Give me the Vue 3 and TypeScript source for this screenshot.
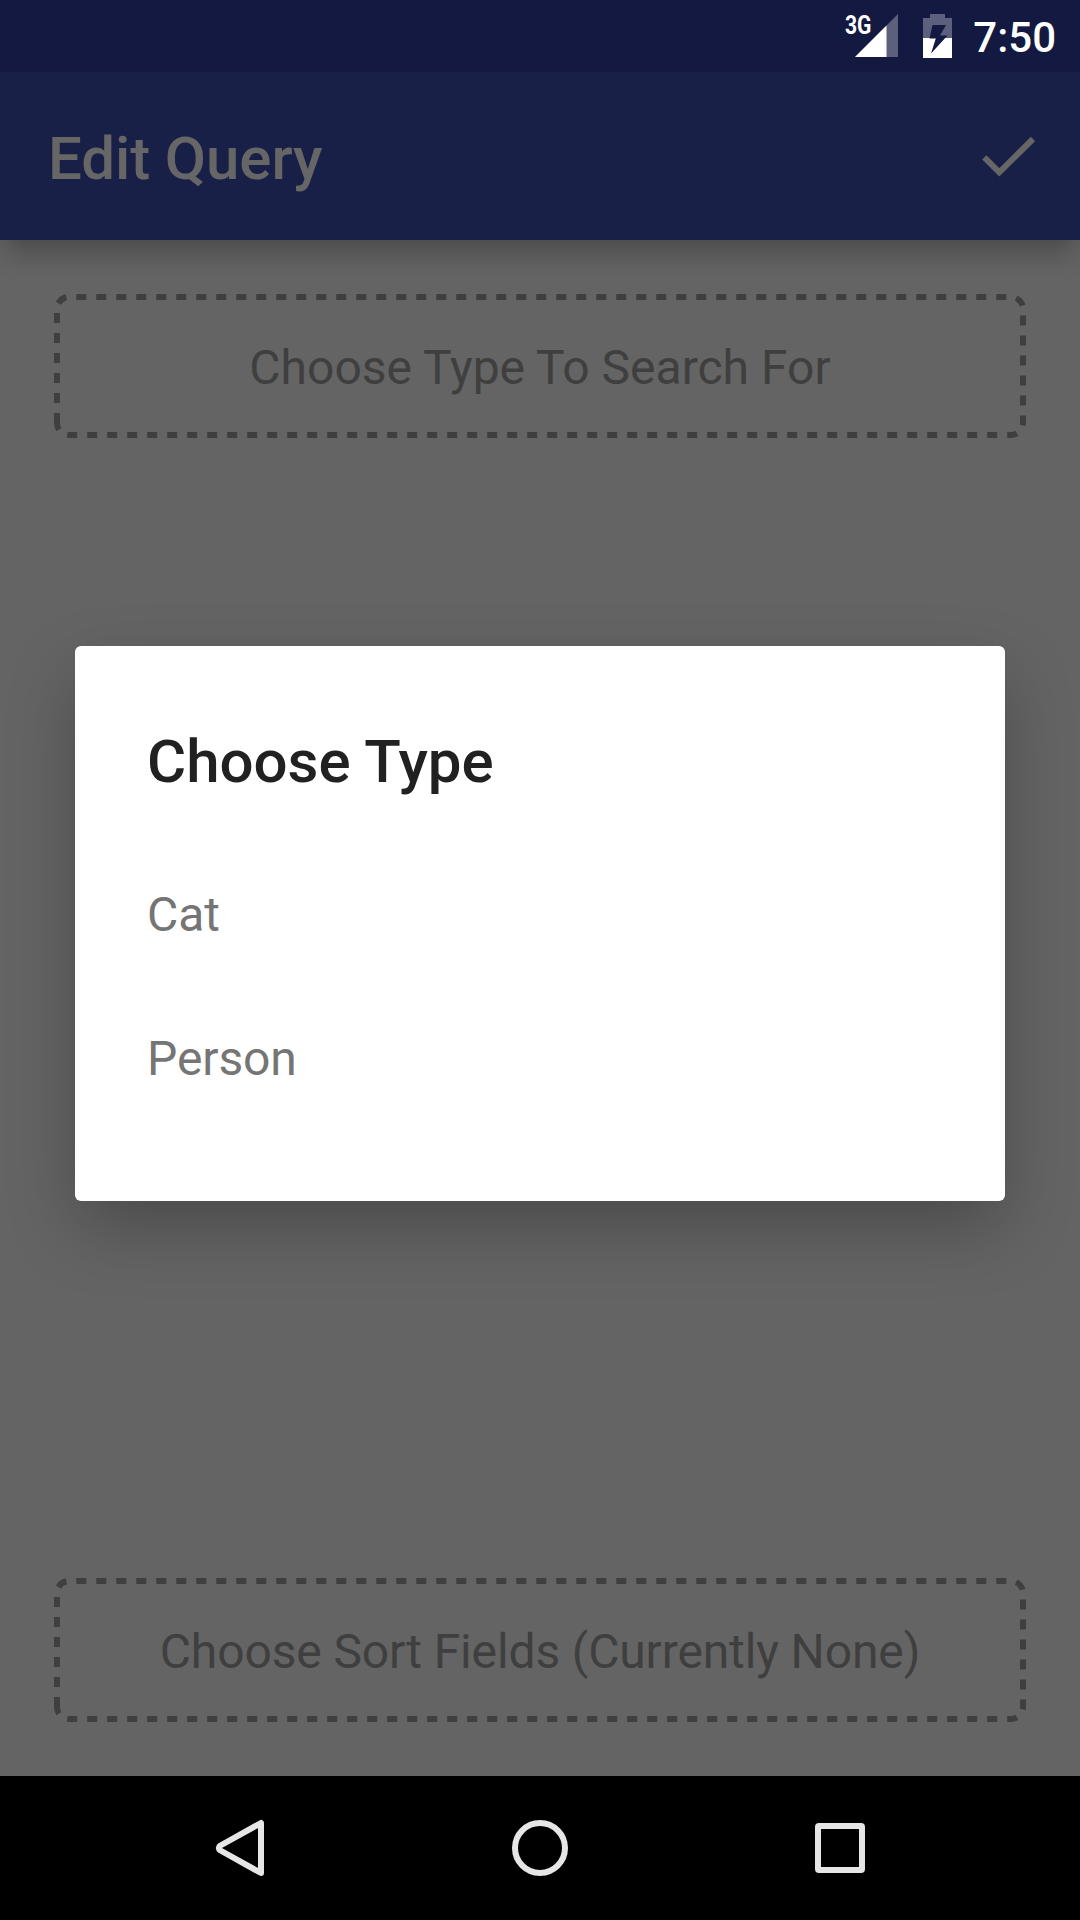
<script setup lang="ts">
const types: string[] = ['Cat', 'Person']

// Rounded outline starting at the bottom of the left edge, so the dashes run clockwise from there
const outline = 'M3 129V15A12 12 0 0 1 15 3H957A12 12 0 0 1 969 15V129A12 12 0 0 1 957 141H15A12 12 0 0 1 3 129Z'
</script>

<template>
  <div class="screen">
    <div class="status">
      <svg class="signal" width="54" height="46" viewBox="0 0 54 46">
        <path d="M53 1V44H10Z" fill="#5d607d" />
        <path d="M41.5 12.5V44H10Z" fill="#fff" />
        <text x="0" y="20.500" textLength="26.500" lengthAdjust="spacingAndGlyphs">3G</text>
      </svg>
      <svg class="battery" width="29" height="44" viewBox="0 0 29 44">
        <path d="M7 0H22V4H29V24H0V4H7Z" fill="#5d607d" />
        <path d="M0 24H29V44H0Z" fill="#fff" />
        <path d="M9.5 11H23L17 21.500H24.500L8 39.500L12.800 24.500H6.500Z" fill="#131940" />
      </svg>
      <span class="time">7:50</span>
    </div>
    <header class="appbar">
      <h1>Edit Query</h1>
      <svg width="54" height="42" viewBox="0 0 54 42">
        <path d="M2.300 22.300L17.300 37.300L51 4" fill="none" stroke="#666" stroke-width="6" />
      </svg>
    </header>
    <main class="content">
      <div class="slot">
        <svg width="972" height="144" viewBox="0 0 972 144"><path :d="outline" /></svg>
        <span>Choose Type To Search For</span>
      </div>
      <div class="slot sort">
        <svg width="972" height="144" viewBox="0 0 972 144"><path :d="outline" /></svg>
        <span>Choose Sort Fields (Currently None)</span>
      </div>
    </main>
    <nav class="navbar">
      <svg width="56" height="60" viewBox="0 0 56 60">
        <path d="M49 5V55L8.500 32.500Q5 30 8.500 27.500Z" />
      </svg>
      <svg width="56" height="60" viewBox="0 0 56 60"><circle cx="28" cy="30" r="25" /></svg>
      <svg width="56" height="60" viewBox="0 0 56 60"><rect x="6" y="8" width="44" height="44" rx="1" /></svg>
    </nav>
    <section class="dialog">
      <h2>Choose Type</h2>
      <ul>
        <li v-for="t in types" :key="t">{{ t }}</li>
      </ul>
    </section>
  </div>
</template>

<style>
body {
  margin: 0;
}
</style>

<style scoped>
.screen {
  position: relative;
  display: flex;
  flex-direction: column;
  width: 1080px;
  height: 1920px;
  overflow: hidden;
  background: #646464;
  font-family: Roboto, sans-serif;
}
h1,
h2,
ul {
  margin: 0;
  padding: 0;
}
svg {
  display: block;
  flex: none;
  overflow: visible;
}
.status {
  display: flex;
  align-items: flex-start;
  justify-content: flex-end;
  box-sizing: border-box;
  height: 72px;
  padding: 0 24px 0 0;
  background: #131940;
  color: #fff;
}
.signal {
  margin: 13px 24px 0 0;
}
.signal text {
  font: 700 26px Roboto, sans-serif;
  fill: #fff;
}
.battery {
  margin: 14px 21px 0 0;
}
.time {
  font-size: 42px;
  font-weight: 500;
  line-height: 76px;
}
.appbar {
  position: relative;
  z-index: 1;
  display: flex;
  align-items: center;
  justify-content: space-between;
  box-sizing: border-box;
  height: 168px;
  padding: 0 44px 0 48px;
  background: #192048;
}
.appbar::after {
  content: '';
  position: absolute;
  inset: 100% 0 auto;
  height: 40px;
  background: linear-gradient(rgba(0, 0, 0, 0.22), rgba(0, 0, 0, 0.09) 40%, rgba(0, 0, 0, 0.015) 75%, transparent);
  mask-image: linear-gradient(90deg, rgba(0, 0, 0, 0.35), #000 24px, #000 calc(100% - 24px), rgba(0, 0, 0, 0.35));
}
h1 {
  padding-top: 5px;
  font-size: 60px;
  font-weight: 500;
  line-height: 70px;
  letter-spacing: -0.1px;
  color: #666;
}
.content {
  display: flex;
  flex: 1;
  flex-direction: column;
  justify-content: space-between;
  padding: 54px;
}
.slot {
  display: grid;
  place-items: center;
  height: 144px;
  font-size: 48px;
  line-height: 56px;
  color: #3f3f3f;
}
.slot > * {
  grid-area: 1 / 1;
}
.slot span {
  padding-top: 4px;
}
.sort {
  letter-spacing: -0.13px;
}
.slot path {
  fill: none;
  stroke: #3f3f3f;
  stroke-width: 6;
  stroke-dasharray: 10 10;
}
.navbar {
  display: flex;
  justify-content: center;
  gap: 244px;
  box-sizing: border-box;
  height: 144px;
  padding-top: 42px;
  background: #000;
}
.navbar svg {
  fill: none;
  stroke: #e6e6e6;
  stroke-width: 6;
  stroke-linejoin: round;
}
.dialog {
  position: absolute;
  z-index: 2;
  top: 646px;
  left: 75px;
  box-sizing: border-box;
  width: 930px;
  height: 555px;
  padding: 81px 72px 0;
  border-radius: 6px;
  background: #fff;
  box-shadow: 0 28px 70px -4px rgba(0, 0, 0, 0.27);
}
h2 {
  font-size: 60px;
  font-weight: 500;
  line-height: 70px;
  color: #212121;
}
ul {
  margin-top: 46px;
  list-style: none;
}
li {
  height: 144px;
  font-size: 48px;
  line-height: 144px;
  letter-spacing: -0.1px;
  color: #757575;
}
</style>
